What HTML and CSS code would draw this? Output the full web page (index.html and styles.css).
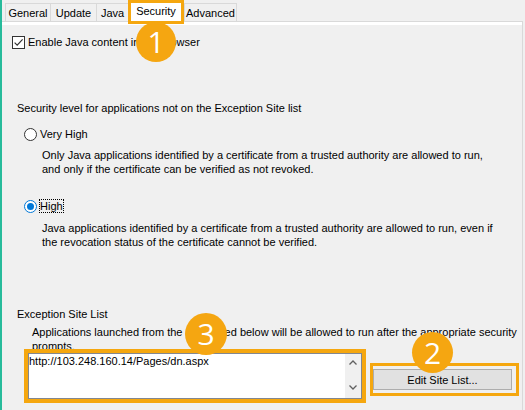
FILE: index.html
```html
<!DOCTYPE html>
<html>
<head>
<meta charset="utf-8">
<link rel="stylesheet" href="styles.css">
</head>
<body>
<div class="window">
  <div class="tabs">
    <div class="tab t-general">General</div>
    <div class="tab t-update">Update</div>
    <div class="tab t-java">Java</div>
    <div class="tab tab-active">Security</div>
    <div class="tab t-advanced">Advanced</div>
  </div>
  <div class="panel">
    <div class="row check-row">
      <svg class="checkbox" width="13" height="13" viewBox="0 0 13 13"><rect x="0.5" y="0.5" width="12" height="12" fill="#fff" stroke="#333"/><path d="M2.6 6.6 L5.2 9.2 L10.6 3.4" fill="none" stroke="#333" stroke-width="1.2"/></svg>
      <span>Enable Java content in the browser</span>
    </div>
    <div class="row section-label">Security level for applications not on the Exception Site list</div>
    <div class="row radio-row very-high">
      <svg class="radio" width="13" height="13" viewBox="0 0 13 13"><circle cx="6.5" cy="6.5" r="6" fill="#fff" stroke="#333"/></svg>
      <span class="radio-label">Very High</span>
    </div>
    <p class="desc d1">Only Java applications identified by a certificate from a trusted authority are allowed to run,<br>and only if the certificate can be verified as not revoked.</p>
    <div class="row radio-row high">
      <svg class="radio" width="13" height="13" viewBox="0 0 13 13"><circle cx="6.5" cy="6.5" r="6" fill="#fff" stroke="#0078d7"/><circle cx="6.5" cy="6.5" r="3.5" fill="#0078d7"/></svg>
      <span class="radio-label focused">High</span>
    </div>
    <p class="desc d2">Java applications identified by a certificate from a trusted authority are allowed to run, even if<br>the revocation status of the certificate cannot be verified.</p>
    <div class="row section-label exception">Exception Site List</div>
    <p class="desc apps">Applications launched from the sites listed below will be allowed to run after the appropriate security<br>prompts.</p>
    <div class="bottom">
      <div class="site-frame">
        <div class="site-box">
          <div class="site-text">http://103.248.160.14/Pages/dn.aspx</div>
          <div class="scrollbar">
            <svg width="16" height="44" viewBox="0 0 16 44"><path d="M4.5 10.5 L8 7 L11.5 10.5" fill="none" stroke="#606060" stroke-width="1.3"/><path d="M4.5 31.5 L8 35 L11.5 31.5" fill="none" stroke="#606060" stroke-width="1.3"/></svg>
          </div>
        </div>
      </div>
      <div class="btn-frame"><button class="btn">Edit Site List...</button></div>
    </div>
  </div>
  <div class="badge b1">1</div>
  <div class="badge b2">2</div>
  <div class="badge b3">3</div>
</div>
</body>
</html>
```
FILE: styles.css
```css
html, body {
  margin: 0;
  padding: 0;
  background: #f0f0f0;
}

body {
  font-family: "Liberation Sans", Arial, sans-serif;
  font-size: 11px;
  color: #000;
}

.window {
  position: relative;
  width: 525px;
  height: 410px;
  box-sizing: border-box;
  border-left: 2px solid #27bb9b;
  background: #f0f0f0;
  display: flex;
  flex-direction: column;
  overflow: hidden;
}

/* Tabs */
.tabs {
  display: flex;
  align-items: flex-end;
  height: 21px;
  padding-left: 3px;
  flex: none;
}

.tab {
  box-sizing: border-box;
  height: 18px;
  border: 1px solid #d9d9d9;
  border-bottom: 0;
  margin-right: -1px;
  padding-top: 1px;
  line-height: 17px;
  text-align: center;
  white-space: nowrap;
  background: #f0f0f0;
}

.t-general { width: 46px; }
.t-update { width: 47px; }
.t-java { width: 33px; }
.t-advanced { width: 53px; }

.tab-active {
  position: relative;
  z-index: 1;
  width: 56px;
  height: 24px;
  margin-right: 0;
  margin-bottom: -3px;
  padding-top: 0;
  border: 3px solid #f5a70f;
  background: #fff;
  line-height: 16px;
}

/* Panel */
.panel {
  flex: 1;
  min-height: 0;
  margin-right: 2px;
  border-top: 1px solid #d9d9d9;
  border-right: 1px solid #d9d9d9;
  box-shadow: inset 0 3px 0 #fff;
  padding-top: 13px;
}

.row {
  display: flex;
  align-items: center;
  height: 14px;
  line-height: 14px;
  white-space: nowrap;
}

.check-row {
  padding-left: 10px;
}

.checkbox {
  margin-right: 3px;
  flex: none;
}

.section-label {
  margin-top: 52px;
  padding-left: 15px;
}

.radio-row {
  padding-left: 22px;
}

.radio {
  flex: none;
  margin-right: 2px;
}

.radio-label {
  display: inline-block;
  line-height: 12px;
  border: 1px solid transparent;
}

.radio-label.focused {
  border: 1px dotted #000;
}

.very-high {
  margin-top: 12px;
}

.high {
  margin-top: 23px;
}

.desc {
  margin: 0;
  line-height: 13.5px;
  white-space: nowrap;
  padding-left: 40px;
}

.d1 { margin-top: 8px; }
.d2 { margin-top: 9px; }

.exception {
  margin-top: 58px;
}

.apps {
  margin-top: 5px;
  padding-left: 30px;
}

/* Bottom area */
.bottom {
  position: relative;
  display: flex;
  align-items: flex-start;
  margin-top: -4px;
  padding-left: 22px;
}

.site-frame {
  box-sizing: border-box;
  width: 342px;
  height: 54px;
  border: 4px solid #f5a70f;
}

.site-box {
  box-sizing: border-box;
  height: 46px;
  border: 1px solid #828790;
  background: #fff;
  display: flex;
}

.site-text {
  flex: 1;
  line-height: 14px;
  white-space: nowrap;
}

.scrollbar {
  width: 16px;
  background: #f0f0f0;
  display: flex;
}

.btn-frame {
  box-sizing: border-box;
  width: 149px;
  height: 33px;
  margin-left: 4px;
  margin-top: 14px;
  border: 3px solid #f5a70f;
  padding: 3px 4px 3px 0;
}

.btn {
  display: block;
  box-sizing: border-box;
  width: 139px;
  height: 21px;
  margin: 0;
  padding: 0;
  border: 1px solid #adadad;
  background: #e1e1e1;
  font-family: "Liberation Sans", Arial, sans-serif;
  font-size: 11px;
  color: #000;
}

/* Numbered badges */
.badge {
  position: absolute;
  z-index: 5;
  border-radius: 50%;
  background: #f5a611;
  color: #fff;
  font-family: "Open Sans", sans-serif;
  font-size: 30px;
  line-height: 1;
  display: flex;
  align-items: center;
  justify-content: center;
}

.b1 { left: 134px; top: 22px; width: 40px; height: 40px; }
.b2 { left: 410px; top: 332px; width: 41px; height: 41px; }
.b3 { left: 183px; top: 313px; width: 42px; height: 42px; }
```
